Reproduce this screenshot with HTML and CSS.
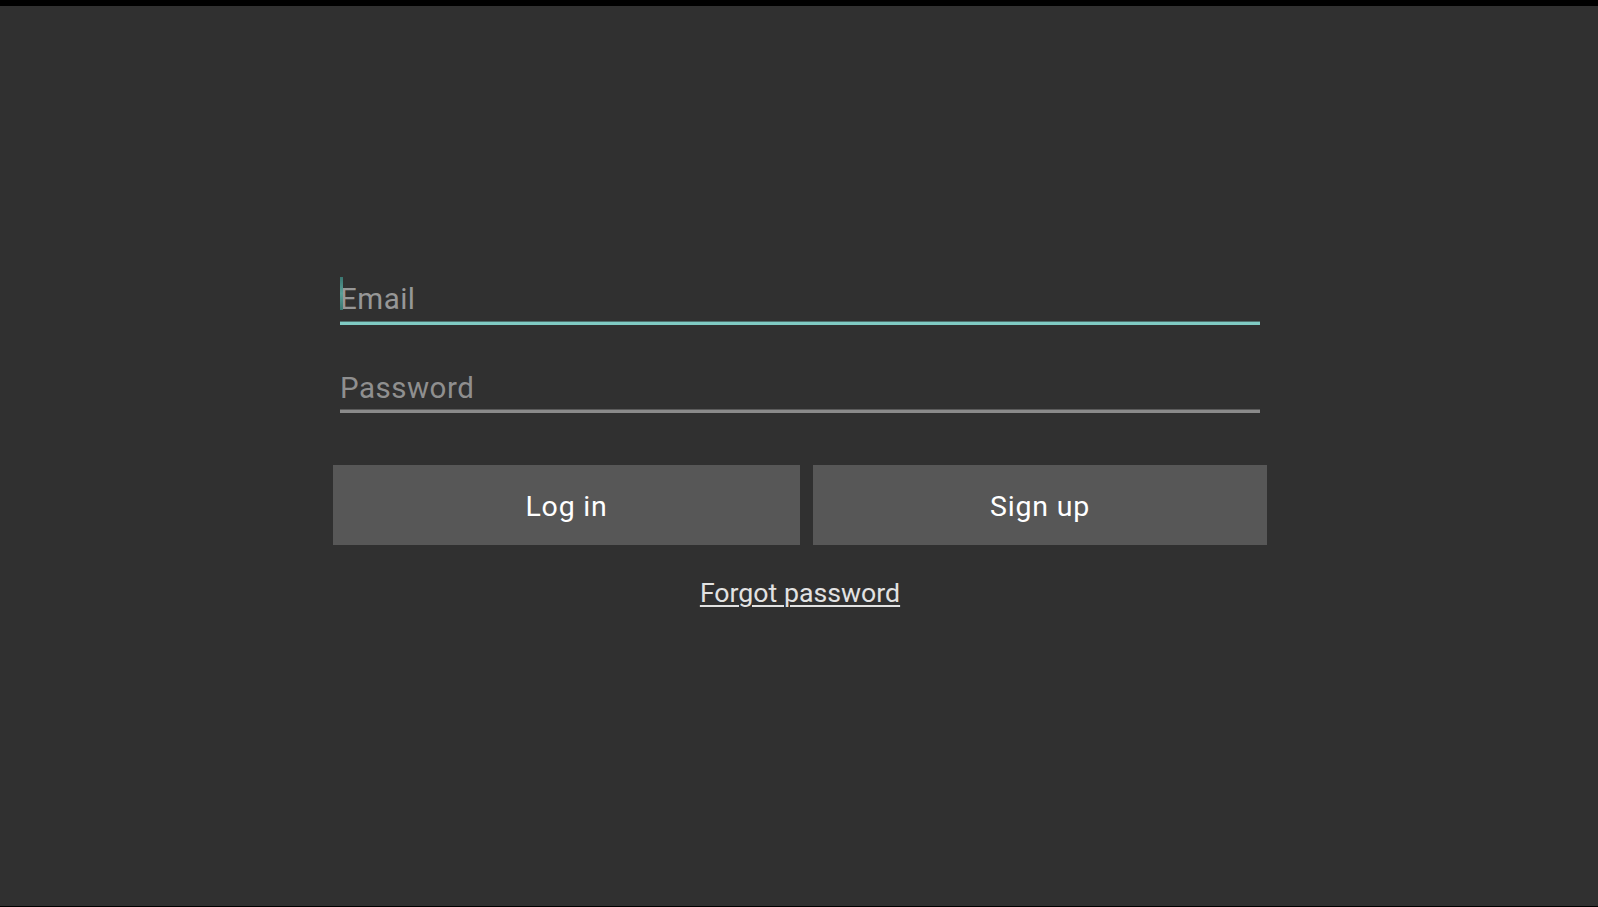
FILE: index.html
```html
<!DOCTYPE html>
<html lang="en">
<head>
<meta charset="utf-8">
<title>Log in</title>
<link rel="stylesheet" href="styles.css">
</head>
<body>
<div class="screen">
  <form class="login">
    <div class="field field-active">
      <span class="cursor"></span>
      <div class="placeholder">Email</div>
      <div class="line"></div>
    </div>
    <div class="field field-pass">
      <div class="placeholder">Password</div>
      <div class="line"></div>
    </div>
    <div class="buttons">
      <div class="btn">Log in</div>
      <div class="btn">Sign up</div>
    </div>
    <div class="forgot"><span class="link">Forgot password</span></div>
  </form>
</div>
</body>
</html>
```
FILE: styles.css
```css
html, body {
  margin: 0;
  padding: 0;
  background: #000;
}
body {
  width: 1598px;
  height: 907px;
  overflow: hidden;
  font-family: Roboto, "Noto Sans", "Liberation Sans", sans-serif;
}
.screen {
  margin-top: 6px;
  height: 900px;
  background: #303030;
  padding-top: 275px;
  box-sizing: border-box;
}
.login {
  width: 934px;
  margin-left: 333px;
  display: flex;
  flex-direction: column;
}
.field {
  position: relative;
  margin: 0 7px;
}
.placeholder {
  font-size: 29.5px;
  line-height: 36px;
  letter-spacing: 0.5px;
  color: #8f8f8f;
}
.field-active .placeholder {
  color: #979797;
}
.line {
  margin-top: 4px;
  height: 4px;
  background: linear-gradient(to bottom, #5b5b5b 0 1px, #8a8a8a 1px 4px);
}
.field-active .line {
  background: linear-gradient(to bottom, #4f716e 0 1px, #80cbc4 1px 4px);
}
.field-pass {
  margin-top: 45px;
}
.field-pass .line {
  margin-top: 3px;
}
.cursor {
  position: absolute;
  left: 0;
  top: -4px;
  width: 3px;
  height: 33px;
  background: linear-gradient(to bottom, #3a7670, #5a9f98 50%, #3a7670);
}
.buttons {
  margin-top: 52px;
  display: grid;
  grid-template-columns: 467px 454px;
  column-gap: 13px;
}
.btn {
  height: 80px;
  background: #575757;
  color: #ffffff;
  font-size: 28.5px;
  letter-spacing: 0.8px;
  display: flex;
  align-items: center;
  justify-content: center;
  padding-top: 3px;
  box-sizing: border-box;
}
.forgot {
  margin-top: 32px;
  text-align: center;
  font-size: 26.7px;
  line-height: 32px;
}
.link {
  color: #e2e2e2;
  text-decoration: underline;
  text-decoration-thickness: 2px;
  text-underline-offset: 3px;
}
```
